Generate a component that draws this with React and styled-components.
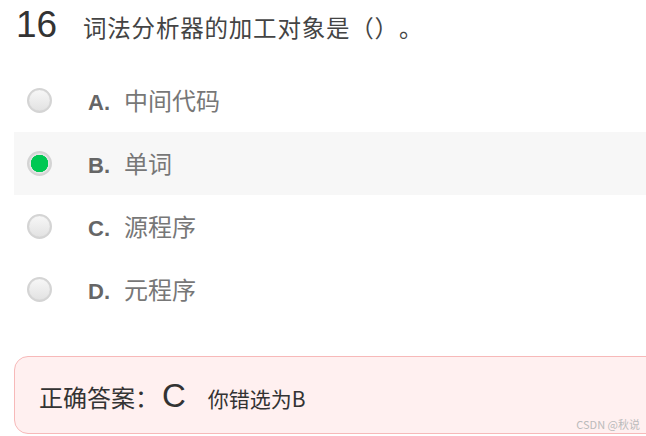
import React from "react";
import styled, { createGlobalStyle } from "styled-components";

const Global = createGlobalStyle`
  html, body { margin: 0; padding: 0; background: #fff; }
  body {
    font-family: "Liberation Sans", Arial, "Noto Sans CJK SC", sans-serif;
    text-spacing-trim: space-all;
  }
`;

const Page = styled.div`
  position: relative;
  width: 646px;
  height: 436px;
  overflow: hidden;
  padding-left: 14px;
  box-sizing: border-box;
`;

const Title = styled.div`
  display: flex;
  align-items: baseline;
  height: 69px;
  line-height: 50px;
  box-sizing: border-box;
`;

const Num = styled.span`
  font-family: "Liberation Sans", Arial, sans-serif;
  font-size: 37px;
  color: #333;
  margin-left: 2px;
  width: 67px;
`;

const Question = styled.span`
  font-family: "Noto Sans CJK SC", sans-serif;
  font-size: 23.5px;
  color: #444;
  letter-spacing: 0.8px;
  text-spacing-trim: space-all;
`;

const Options = styled.div`
  display: flex;
  flex-direction: column;
`;

const Row = styled.div`
  display: flex;
  align-items: center;
  height: 63px;
  background: ${(p) => (p.$active ? "#f7f7f7" : "transparent")};
`;

const Radio = styled.span`
  flex: none;
  width: 25px;
  height: 25px;
  border-radius: 50%;
  box-sizing: border-box;
  margin-left: 13px;
  margin-right: 36px;
  border: 2px solid #d4d4d4;
  background: ${(p) =>
    p.$checked
      ? "radial-gradient(circle, #00c853 0 8.5px, #e6e6e6 9px)"
      : "linear-gradient(#f7f7f7, #e2e2e2)"};
  box-shadow: inset 0 0 1px rgba(0, 0, 0, 0.1);
`;

const Label = styled.span`
  display: flex;
  align-items: baseline;
  line-height: 30px;
  padding-top: 2px;
`;

const Letter = styled.span`
  font-family: "Liberation Sans", Arial, sans-serif;
  font-weight: bold;
  font-size: 22px;
  color: #666;
  width: 36px;
`;

const OptText = styled.span`
  font-family: "Noto Sans CJK SC", sans-serif;
  font-size: 24px;
  color: #777;
`;

const AnswerBox = styled.div`
  margin-top: 35px;
  height: 78px;
  width: 660px;
  box-sizing: border-box;
  border: 1px solid #f7b9b9;
  border-radius: 14px;
  background: #fff0f0;
  display: flex;
  align-items: baseline;
  padding-left: 24px;
  padding-top: 14px;
  line-height: 50px;
`;

const AnsLabel = styled.span`
  font-family: "Noto Sans CJK SC", sans-serif;
  font-size: 24px;
  color: #333;
  text-spacing-trim: space-all;
`;

const AnsLetter = styled.span`
  font-family: "Liberation Sans", Arial, sans-serif;
  font-size: 33px;
  color: #333;
  margin-left: 3px;
  margin-right: 22px;
`;

const Wrong = styled.span`
  font-family: "Noto Sans CJK SC", sans-serif;
  font-size: 21px;
  color: #333;
`;

const Watermark = styled.span`
  position: absolute;
  right: 6px;
  bottom: 4px;
  font-family: "Noto Sans CJK SC", sans-serif;
  font-size: 11px;
  color: #bbb;
`;

const options = [
  { l: "A.", t: "中间代码" },
  { l: "B.", t: "单词", checked: true },
  { l: "C.", t: "源程序" },
  { l: "D.", t: "元程序" },
];

export default function App() {
  return (
    <>
      <Global />
      <Page>
        <Title>
          <Num>16</Num>
          <Question>词法分析器的加工对象是（）。</Question>
        </Title>
        <Options>
          {options.map((o) => (
            <Row key={o.l} $active={o.checked}>
              <Radio $checked={o.checked} />
              <Label>
                <Letter>{o.l}</Letter>
                <OptText>{o.t}</OptText>
              </Label>
            </Row>
          ))}
        </Options>
        <AnswerBox>
          <AnsLabel>正确答案：</AnsLabel>
          <AnsLetter>C</AnsLetter>
          <Wrong>你错选为B</Wrong>
        </AnswerBox>
        <Watermark>CSDN @秋说</Watermark>
      </Page>
    </>
  );
}
